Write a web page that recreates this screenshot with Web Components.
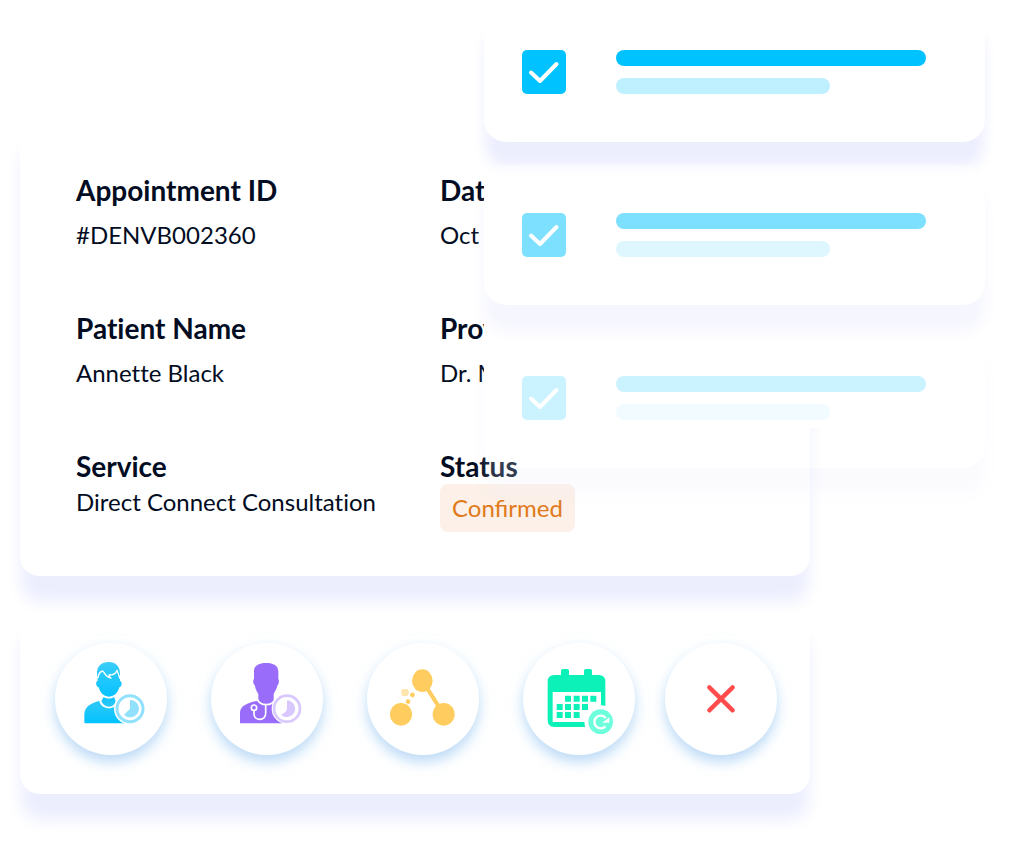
<!DOCTYPE html>
<html lang="en">
<head>
<meta charset="utf-8">
<meta name="viewport" content="width=device-width, initial-scale=1">
<title>Appointment overview</title>
<style>
  body { margin: 0; background: #fff; font-family: Lato, "Open Sans", sans-serif; color: #020c22; }
</style>
</head>
<body>
<appointment-page></appointment-page>

<script>
const define = (name, html) => {
  const template = document.createElement("template");
  template.innerHTML = html;
  customElements.define(name, class extends HTMLElement {
    constructor() {
      super();
      this.attachShadow({ mode: "open" }).append(template.content.cloneNode(true));
    }
    connectedCallback() {
      const label = this.getAttribute("label");
      const control = this.shadowRoot.querySelector("button, input");
      if (label && control) control.setAttribute("aria-label", label);
    }
  });
};

/* White panel with a soft lavender shadow */
define("soft-card", `
  <style>
    :host { display: block; box-sizing: border-box; background: #fff; border-radius: 20px;
      box-shadow: 0 27px 16px -1px #eceefe; }
  </style>
  <slot></slot>`);

/* Label above its value */
define("info-field", `
  <style>
    :host { display: flex; flex-direction: column; align-items: flex-start; gap: 13px; white-space: nowrap;
      font-variant-ligatures: none; }
    :host([compact]) { gap: 2px; }
    h2 { margin: 0; font-size: 28px; line-height: 32px; font-weight: 700; }
    div { font-size: 24px; line-height: 32px; }
    :host([compact]) div { line-height: 36px; }
  </style>
  <h2><slot name="label"></slot></h2>
  <div><slot></slot></div>`);

define("status-badge", `
  <style>
    :host { display: block; padding: 0 12px; border-radius: 8px; background: #fcf0e8; color: #e07a1b;
      line-height: 48px; font-variant-ligatures: common-ligatures; }
  </style>
  <slot></slot>`);

/* Checklist entry: tick box and two placeholder bars */
define("check-item", `
  <style>
    :host { display: flex; align-items: center; gap: 50px; box-sizing: border-box; height: 140px;
      padding: 0 59px 0 38px; background: #fff; border-radius: 22px;
      box-shadow: 0 26px 14px -1px #eceefe; }
    .box { display: grid; flex: none; width: 44px; height: 44px; }
    .box > * { grid-area: 1 / 1; }
    input { appearance: none; margin: 0; width: 44px; height: 44px; border-radius: 5px; background: #bff0ff; }
    input:checked { background: #00c2ff; }
    svg { pointer-events: none; }
    .bars { flex: 1; display: grid; gap: 12px; }
    .bars span { height: 16px; border-radius: 8px; background: #00c2ff; }
    .bars span + span { width: 69%; background: #bff0ff; }
  </style>
  <span class="box">
    <input type="checkbox" checked>
    <svg viewBox="0 0 44 44" fill="none" stroke="#fff" stroke-width="4" stroke-linecap="round" stroke-linejoin="round" aria-hidden="true"><path d="M9 22.500L18 31L34.500 14"/></svg>
  </span>
  <div class="bars"><span></span><span></span></div>`);

define("round-action", `
  <style>
    :host { display: block; flex: none; }
    button { display: block; width: 112px; height: 112px; padding: 0; border: 0; border-radius: 50%;
      background: #fff; cursor: pointer;
      box-shadow: 0 7px 12px rgba(70, 150, 225, .3), 0 6px 24px rgba(0, 170, 255, .06); }
  </style>
  <button type="button"><slot></slot></button>`);

define("appointment-page", `
  <style>
    :host { display: block; padding: 2px 35px 50px 20px; }
    main { display: grid; grid-template-columns: 464fr 326fr 175fr; }
    .details { grid-area: 1 / 1 / 2 / 3; }
    .appointment { position: relative; margin-top: 116px; padding: 56px 56px 44px; z-index: 1;
      display: grid; grid-template-columns: 364fr 314fr; row-gap: 61px; }
    .stack { grid-area: 1 / 2 / 2 / 4; align-self: start; z-index: 2; display: grid; gap: 23px;
      background: linear-gradient(#fff, #fff) no-repeat 0 0 / 100% calc(100% - 40px); }
    .stack :nth-child(2) { opacity: .5; }
    .stack :nth-child(3) { opacity: .2; }
    .actions { margin-top: 28px; padding: 39px 34px 39px 35px; display: flex; gap: 30px; }
    .group { display: flex; gap: 44px; }
    svg { display: block; width: 112px; height: 112px; }
  </style>
  <main>
    <section class="details">
      <soft-card class="appointment">
        <info-field><span slot="label">Appointment ID</span>#DENVB002360</info-field>
        <info-field><span slot="label">Date</span>Oct</info-field>
        <info-field><span slot="label">Patient Name</span>Annette Black</info-field>
        <info-field><span slot="label">Provider</span>Dr. M</info-field>
        <info-field compact><span slot="label">Service</span>Direct Connect Consultation</info-field>
        <info-field compact><span slot="label">Status</span><status-badge>Confirmed</status-badge></info-field>
      </soft-card>
      <soft-card class="actions">
        <div class="group">
          <round-action label="Patient waiting">
            <svg viewBox="45 39 336 336" aria-hidden="true">
              <defs><linearGradient id="sky" gradientUnits="userSpaceOnUse" x1="0" y1="96" x2="0" y2="280"><stop stop-color="#3acdf8"/><stop offset=".55" stop-color="#08c2ff"/><stop offset=".7" stop-color="#2ac8f8"/><stop offset="1" stop-color="#00c2ff"/></linearGradient></defs>
              <path fill="url(#sky)" d="M171 132C170 108 185 96 206 96C227 96 240 110 240 130V153C247 154 247 170 238 172C234 187 225 199 207 200C189 199 180 187 176 172C167 170 166 154 173 153Z"/>
              <path fill="none" stroke="#fff" stroke-width="4" stroke-linejoin="round" d="M170 144L174 143C175 135 179 125 188 123C194 126 193 140 213 144C208 141 206 138 208 134C218 136 227 131 231 121C234 130 237 134 239 144L243 144"/>
              <path fill="url(#sky)" d="M191 201C201 207 213 207 222 201L227 213C225 223 218 230 207 230C196 230 188 223 184 213Z"/>
              <path fill="url(#sky)" d="M136 280Q133 280 133 276V252C134 230 155 218 178 213C184 242 230 242 234 213L262 222V280Z"/>
              <circle cx="270" cy="236" r="48" fill="#fff"/>
              <circle cx="270" cy="236" r="39" fill="none" stroke="#91e1fd" stroke-width="9"/>
              <path fill="#91e1fd" d="M270 210A26 26 0 1 1 252 254L270 236Z"/>
            </svg>
          </round-action>
          <round-action label="Provider waiting">
            <svg viewBox="48 39 336 336" aria-hidden="true">
              <path fill="#9a6cfa" d="M177 128C175 107 191 99 213 99C236 99 251 107 250 128V147C253 151 252 163 247 167C245 178 239 184 236 192V212C228 224 199 224 190 212V192C186 184 181 178 180 167C174 163 173 151 177 147Z"/>
              <path fill="#9a6cfa" d="M135 280V246C137 226 160 219 188 212H238L262 222V280Z"/>
              <g fill="none" stroke="#fff" stroke-width="5"><path d="M187 208C195 229 232 229 240 208M177 242V252C178 274 212 274 212 250V224"/><circle cx="177" cy="233" r="8"/></g>
              <circle cx="276" cy="236" r="46" fill="#fff"/>
              <circle cx="276" cy="236" r="39" fill="#fff" stroke="#d9c8fe" stroke-width="8"/>
              <path fill="#d9c8fe" d="M276 211A25 25 0 1 1 258 254C270 250 277 242 276 232Z"/>
            </svg>
          </round-action>
          <round-action label="Share">
            <svg viewBox="51 39 336 336" fill="#ffcd5f" aria-hidden="true">
              <path stroke="#ffcd5f" stroke-width="12" d="M217 152L281 253"/>
              <ellipse cx="217" cy="152" rx="31" ry="34"/><ellipse cx="153" cy="253" rx="33" ry="34"/><ellipse cx="281" cy="253" rx="33" ry="34"/>
              <rect x="181" y="188" width="13" height="13" rx="4" transform="rotate(25 187 194)"/>
              <rect x="168" y="208" width="13" height="13" rx="4" transform="rotate(25 174 214)"/>
              <rect x="154" y="177" width="22" height="21" rx="7" fill="#ffe4ad"/>
            </svg>
          </round-action>
          <round-action label="Reschedule">
            <svg viewBox="54 39 336 336" fill="#0cf1b8" aria-hidden="true">
              <path fill-rule="evenodd" d="M168 135V122Q168 117 173 117H187Q192 117 192 122V135H237V122Q237 117 242 117H256Q261 117 261 122V135H281Q301 135 301 155V271Q301 291 281 291H148Q128 291 128 271V155Q128 135 148 135ZM143 186V276H288V186Z"/>
              <path d="M180 197h18v18h-18zM206 197h18v18h-18zM231 197h18v18h-18zM256 197h18v18h-18zM155 222h18v18h-18zM180 222h18v18h-18zM206 222h18v18h-18zM231 222h18v18h-18zM155 246h18v18h-18zM180 246h18v18h-18zM206 246h18v18h-18z"/>
              <circle cx="287" cy="275" r="49" fill="#fff"/>
              <circle cx="287" cy="275" r="37" fill="#6dffdc"/>
              <path fill="none" stroke="#fff" stroke-width="7" d="M301 289A19 19 0 1 1 302 264"/>
              <path fill="#fff" d="M313 262V278H292Z"/>
            </svg>
          </round-action>
        </div>
        <round-action label="Cancel">
          <svg viewBox="45 39 336 336" fill="none" stroke="#ff4b4b" stroke-width="13" stroke-linecap="round" aria-hidden="true"><path d="M178 172L248 241M248 172L178 241"/></svg>
        </round-action>
      </soft-card>
    </section>
    <section class="stack" aria-label="Checklist">
      <check-item label="First task"></check-item>
      <check-item label="Second task"></check-item>
      <check-item label="Third task"></check-item>
    </section>
  </main>`);
</script>
</body>
</html>
